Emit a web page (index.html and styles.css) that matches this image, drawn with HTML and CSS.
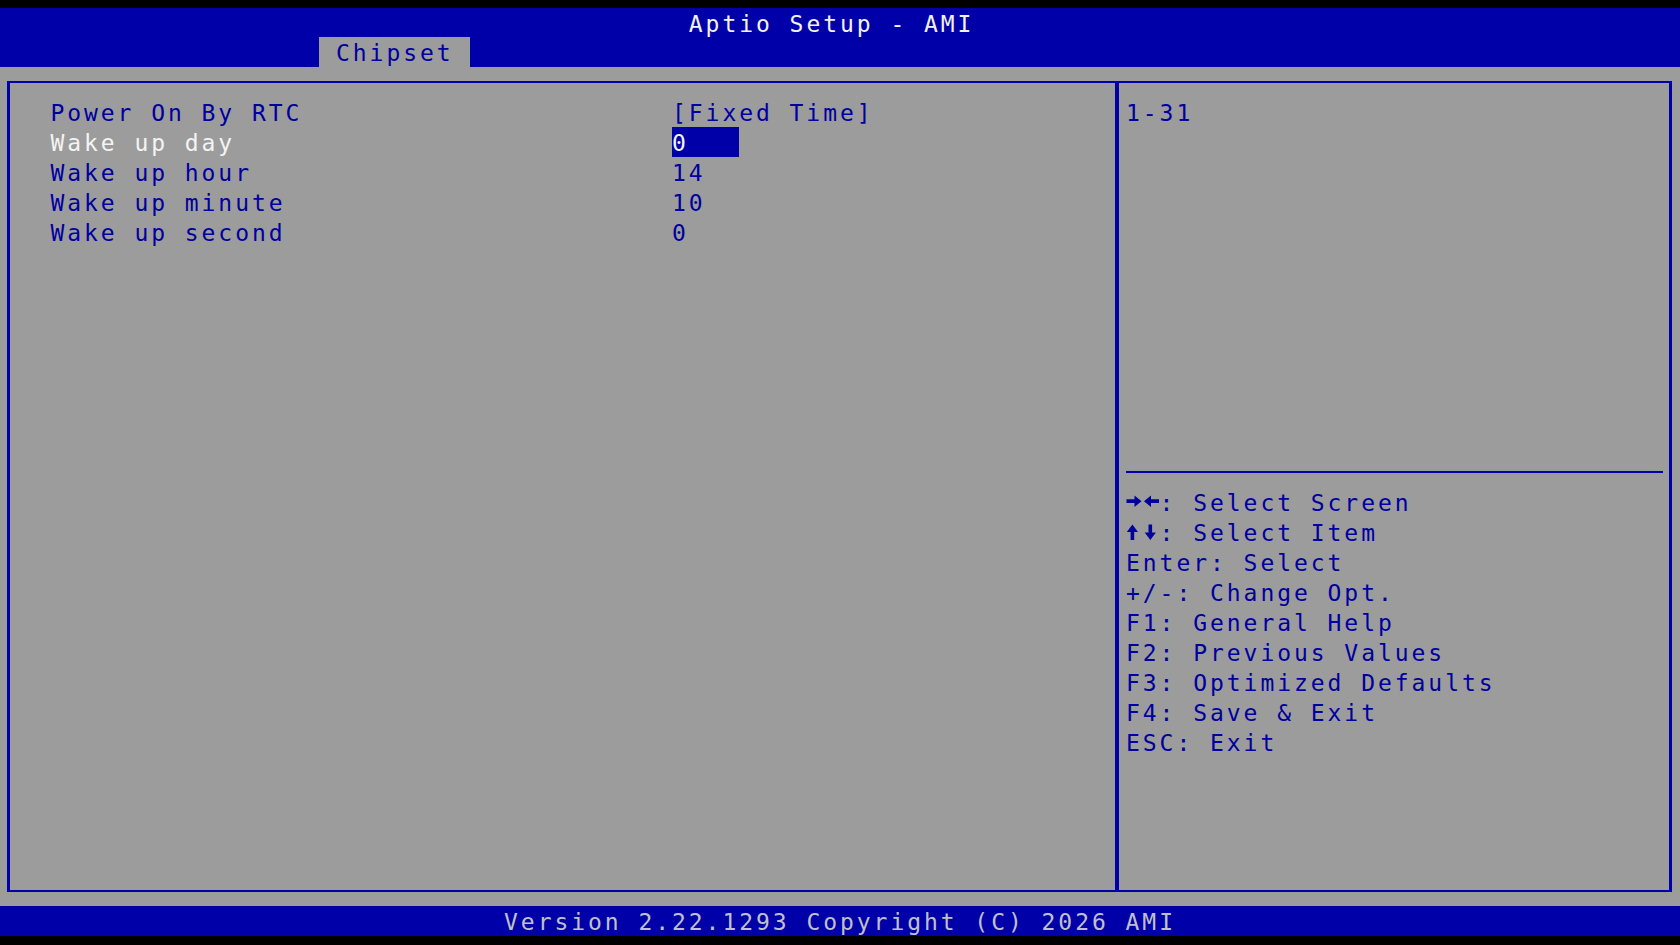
FILE: index.html
```html
<!DOCTYPE html>
<html lang="en">
<head>
  <meta charset="UTF-8">
  <meta name="viewport" content="width=device-width, initial-scale=1.0">
  <title>Aptio Setup - AMI</title>
  <link rel="stylesheet" href="styles.css">
</head>
<body>
  <div class="screen">
    <header class="topbar">
      <div class="title">Aptio Setup - AMI</div>
      <div class="tabs">
        <div class="tab">Chipset</div>
      </div>
    </header>

    <main class="workspace">
      <div class="frame">
        <!-- Setup items -->
        <section class="items">
          <div class="row">
            <span class="label">Power On By RTC</span>
            <span class="value">[Fixed Time]</span>
          </div>
          <div class="row selected">
            <span class="label">Wake up day</span>
            <span class="value"><span class="edit-box">0</span></span>
          </div>
          <div class="row">
            <span class="label">Wake up hour</span>
            <span class="value">14</span>
          </div>
          <div class="row">
            <span class="label">Wake up minute</span>
            <span class="value">10</span>
          </div>
          <div class="row">
            <span class="label">Wake up second</span>
            <span class="value">0</span>
          </div>
        </section>

        <!-- Help panel -->
        <aside class="help">
          <div class="help-text">1-31</div>
          <div class="help-rule"></div>
          <ul class="keys">
            <li><svg class="key-arrow" viewBox="0 0 16.8 30" aria-label="right"><path d="M0.5 12.3h8v-3.8l7 5.7-7 5.7v-3.8h-8z"/></svg><svg class="key-arrow" viewBox="0 0 16.8 30" aria-label="left"><path d="M16 12.3h-8v-3.8l-7 5.7 7 5.7v-3.8h8z"/></svg>: Select Screen</li>
            <li><svg class="key-arrow" viewBox="0 0 16.8 30" aria-label="up"><path d="M4.6 23v-8h-3.8l5.6-7.5 5.6 7.5h-3.8v8z"/></svg><svg class="key-arrow" viewBox="0 0 16.8 30" aria-label="down"><path d="M5.5 7.5v8h-3.8l5.6 7.5 5.6-7.5h-3.8v-8z"/></svg>: Select Item</li>
            <li>Enter: Select</li>
            <li>+/-: Change Opt.</li>
            <li>F1: General Help</li>
            <li>F2: Previous Values</li>
            <li>F3: Optimized Defaults</li>
            <li>F4: Save &amp; Exit</li>
            <li>ESC: Exit</li>
          </ul>
        </aside>
      </div>
    </main>

    <footer class="statusbar">Version 2.22.1293 Copyright (C) 2026 AMI</footer>
  </div>
</body>
</html>
```

FILE: styles.css
```css
body {
  margin: 0;
  padding: 0;
  background-color: #000;
  font-family: "DejaVu Sans Mono", "Liberation Mono", monospace;
  font-size: 23px;
  letter-spacing: 2.95px;
  color: #0000a0;
}

.screen {
  width: 1680px;
  height: 945px;
  padding-top: 8px;
  box-sizing: border-box;
}

.topbar {
  height: 59px;
  background-color: #0000a8;
}

.title {
  height: 29px;
  line-height: 33px;
  text-align: center;
  padding-right: 16.8px;
  color: #f2f2f2;
  white-space: pre;
}

.tabs {
  display: flex;
  height: 30px;
  padding-left: 319.2px;
}

.tab {
  padding: 0 16.8px;
  height: 30px;
  line-height: 33px;
  background-color: #9c9c9c;
  color: #0000a0;
}

.workspace {
  height: 839px;
  background-color: #9c9c9c;
  padding: 14px 8px 14px 7px;
  box-sizing: border-box;
}

.frame {
  display: flex;
  height: 811px;
  box-sizing: border-box;
  border-top: 2px solid #0000a8;
  border-bottom: 2px solid #0000a8;
  border-left: 3px solid #0000a8;
  border-right: 3px solid #0000a8;
}

.items {
  width: 1109px;
  box-sizing: border-box;
  padding-top: 14px;
  padding-left: 40.4px;
  border-right: 4px solid #0000a8;
}

.row {
  display: grid;
  grid-template-columns: 621.6px 1fr;
  height: 30px;
  line-height: 33px;
  white-space: pre;
}

.row.selected .label {
  color: #f4f4f4;
}

.edit-box {
  display: inline-block;
  width: 67.2px;
  height: 30px;
  vertical-align: top;
  background-color: #0000a8;
  color: #f4f4f4;
}

.help {
  flex: 1;
  display: flex;
  flex-direction: column;
  padding: 14px 6px 0 7px;
}

.help-text {
  height: 360px;
  line-height: 33px;
}

.help-rule {
  height: 2px;
  margin: 14px 0;
  background-color: #0000a8;
}

.keys {
  list-style: none;
  margin: 0;
  padding: 0;
}

.keys li {
  height: 30px;
  line-height: 33px;
  white-space: pre;
}

.key-arrow {
  width: 16.8px;
  height: 30px;
  vertical-align: top;
  fill: #0000a0;
}

.statusbar {
  height: 30px;
  line-height: 33px;
  background-color: #0000a8;
  color: #c0c0cc;
  text-align: center;
  white-space: pre;
}
```
